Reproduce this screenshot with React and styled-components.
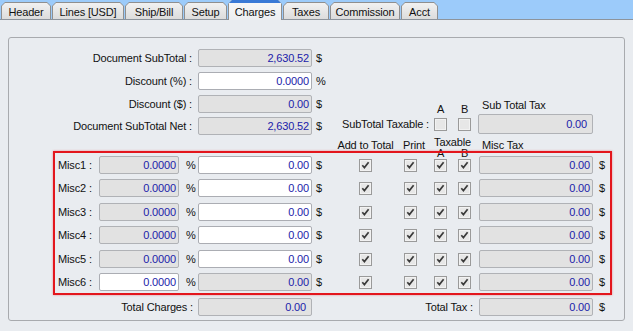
import React from 'react';
import styled, { createGlobalStyle } from 'styled-components';

const GlobalStyle = createGlobalStyle`
  html, body {
    margin: 0;
    padding: 0;
  }
  body {
    width: 633px;
    height: 331px;
    overflow: hidden;
    background: #e9ecf0;
    font-family: "Liberation Sans", Arial, sans-serif;
    font-size: 11px;
    letter-spacing: -0.15px;
    color: #111;
  }
`;

// column tracks shared by every part of the form (x = 55 .. 610)
const COLS = '44px 80px 19px 114px 47px 13px 32px 13px 17px 13px 11px 13px 8px 114px 17px';

const Page = styled.div`
  width: 633px;
  height: 331px;
`;

// tab strip
const TabStrip = styled.div`
  display: flex;
  align-items: flex-end;
  gap: 1px;
  height: 19px;
  padding-left: 1px;
  background: #9ccbfa;
  border-bottom: 1px solid #8d949c;
`;

const TabShell = styled.div`
  display: flex;
  width: ${p => p.$w}px;
  height: ${p => (p.$active ? 20 : 17)}px;
  margin-bottom: ${p => (p.$active ? -1 : 0)}px;
  padding: ${p => (p.$active ? '0 1px' : '1px 1px 0')};
  box-sizing: border-box;
  background: #8f8f8f;
  clip-path: polygon(4px 0, calc(100% - 4px) 0, 100% 4px, 100% 100%, 0 100%, 0 4px);
`;

const TabFace = styled.div`
  flex: 1;
  box-sizing: border-box;
  padding-top: 3px;
  line-height: 13px;
  text-align: center;
  white-space: nowrap;
  color: #111;
  border-top: ${p => (p.$active ? '3px solid #3a7ad6' : 'none')};
  background: ${p => (p.$active ? 'linear-gradient(#f7f7f7, #eceef1)' : 'linear-gradient(#f1f1f1, #dcdcdc)')};
  clip-path: polygon(3px 0, calc(100% - 3px) 0, 100% 3px, 100% 100%, 0 100%, 0 3px);
`;

// group box and form grids
const GroupBox = styled.div`
  margin: 17px 0 0 8px;
  width: 617px;
  height: 284px;
  box-sizing: border-box;
  border: 1px solid #a8aaae;
  border-radius: 3px;
  padding: 11px 0 0 46px;
`;

const FormGrid = styled.div`
  display: grid;
  grid-template-columns: ${COLS};
  grid-template-rows: ${p => p.$rows};
  row-gap: ${p => p.$gap || 0}px;
  align-items: center;
  margin-top: ${p => p.$mt || 0}px;
`;

const MiscBox = styled.div`
  position: relative;
  width: 559px;
  margin: -5.4px 0 0 -2px;
  box-sizing: border-box;
  border: 2px solid #e3161d;
  box-shadow: 0 0 2px rgba(227, 22, 29, 0.45);
  padding: 3px 0 2px;
`;

const FieldLabel = styled.div`
  grid-column: ${p => p.$col};
  grid-row: ${p => p.$row || 'auto'};
  display: flex;
  justify-content: flex-end;
  padding-right: ${p => p.$pr ?? 6}px;
  white-space: nowrap;
`;

const RowLabel = styled.div`
  grid-column: 1;
  padding-left: 3px;
  white-space: nowrap;
`;

const Unit = styled.div`
  grid-column: ${p => p.$col};
  padding-left: ${p => p.$pl ?? 4}px;
`;

const Field = styled.div`
  grid-column: ${p => p.$col};
  grid-row: ${p => p.$row || 'auto'};
  height: ${p => p.$h || 18}px;
  box-sizing: border-box;
  border: 1px solid ${p => (p.$edit ? '#abadb3' : '#b0b2b6')};
  border-radius: 2px;
  background: ${p => (p.$edit ? '#fff' : '#e2e2e2')};
  color: #1b1baa;
  text-align: right;
  padding-right: ${p => (p.$inset ? 5 : 2)}px;
  line-height: ${p => (p.$h || 18) - 2}px;
  white-space: nowrap;
`;

const Box = styled.span`
  grid-column: ${p => p.$col};
  grid-row: ${p => p.$row || 'auto'};
  width: 13px;
  height: 13px;
  margin-top: 1px;
  box-sizing: border-box;
  border: 1px solid #9a9a9a;
  background: #e7e7e7;
  box-shadow: inset 0 0 0 1px #f2f2f2;
  display: flex;
  align-items: center;
  justify-content: center;
`;

const HeadText = styled.div`
  grid-column: ${p => p.$col};
  align-self: start;
  margin-top: 4px;
  line-height: 13px;
  white-space: nowrap;
  display: flex;
  justify-content: ${p => p.$justify || 'flex-start'};
  padding-left: ${p => p.$pl || 0}px;
  margin-left: ${p => p.$ml || 0}px;
`;

const TaxableHead = styled.div`
  grid-column: 10 / 13;
  align-self: start;
  margin-top: 1.6px;
  display: grid;
  grid-template-columns: 13px 11px 13px;
  line-height: 11px;
  text-align: center;
`;

const TaxableTitle = styled.div`
  grid-column: 1 / -1;
`;

const Letter = styled.div`
  grid-column: ${p => p.$col};
  text-align: center;
`;

// SubTotal Taxable block on the right of the top rows
const TaxBlock = styled.div`
  grid-column: 6 / 16;
  grid-row: 3 / span 2;
  align-self: stretch;
  display: grid;
  grid-template-columns: 75px 13px 11px 13px 7px 115px 1fr;
  grid-template-rows: 1fr 20px;
  padding-bottom: 1px;
  align-items: center;
`;

const TaxLetter = styled.div`
  grid-column: ${p => p.$col};
  grid-row: 1;
  align-self: end;
  text-align: center;
  line-height: 12px;
  margin-bottom: -1px;
`;

const TaxTitle = styled.div`
  grid-column: 6;
  grid-row: 1;
  align-self: end;
  padding-left: 4px;
  line-height: 13px;
  margin-bottom: 2px;
`;

const Check = ({ col, row, checked }) => (
  <Box $col={col} $row={row}>
    {checked && (
      <svg width="9" height="9" viewBox="0 0 9 9">
        <path d="M1.3 4.3 L3.4 6.6 L7.6 1.3" stroke="#3a3a3a" strokeWidth="1.7" fill="none" />
      </svg>
    )}
  </Box>
);

const tabs = [
  { label: 'Header', w: 50 },
  { label: 'Lines [USD]', w: 72 },
  { label: 'Ship/Bill', w: 58 },
  { label: 'Setup', w: 43 },
  { label: 'Charges', w: 54, active: true },
  { label: 'Taxes', w: 46 },
  { label: 'Commission', w: 70 },
  { label: 'Acct', w: 37 },
];

const topRows = [
  { label: 'Document SubTotal :', value: '2,630.52', unit: '$' },
  { label: 'Discount (%) :', value: '0.0000', unit: '%', edit: true },
  { label: 'Discount ($) :', value: '0.00', unit: '$' },
  { label: 'Document SubTotal Net :', value: '2,630.52', unit: '$' },
];

const miscRows = [1, 2, 3, 4, 5, 6].map(n => ({
  label: `Misc${n} :`,
  pct: '0.0000',
  amt: '0.00',
  tax: '0.00',
  pctEdit: n === 6,
}));

export default function App() {
  return (
    <Page>
      <GlobalStyle />
      <TabStrip>
        {tabs.map(t => (
          <TabShell key={t.label} $w={t.w} $active={t.active}>
            <TabFace $active={t.active}>{t.label}</TabFace>
          </TabShell>
        ))}
      </TabStrip>

      <GroupBox>
        <FormGrid $rows="repeat(4, 18px)" $gap={4.8}>
          {topRows.map(r => (
            <React.Fragment key={r.label}>
              <FieldLabel $col="1 / 4">{r.label}</FieldLabel>
              <Field $col={4} $edit={r.edit}>{r.value}</Field>
              <Unit $col={5}>{r.unit}</Unit>
            </React.Fragment>
          ))}
          <TaxBlock>
            <TaxLetter $col={2}>A</TaxLetter>
            <TaxLetter $col={4}>B</TaxLetter>
            <TaxTitle>Sub Total Tax</TaxTitle>
            <FieldLabel $col={1} $row={2} $pr={5}>SubTotal Taxable :</FieldLabel>
            <Check col={2} row={2} />
            <Check col={4} row={2} />
            <Field $col={6} $row={2} $h={20} $inset>0.00</Field>
          </TaxBlock>
        </FormGrid>

        <FormGrid $rows="21px">
          <HeadText $col={6} $justify="center">Add to Total</HeadText>
          <HeadText $col={8} $ml={-1}>Print</HeadText>
          <TaxableHead>
            <TaxableTitle>Taxable</TaxableTitle>
            <Letter $col={1}>A</Letter>
            <Letter $col={3}>B</Letter>
          </TaxableHead>
          <HeadText $col={14} $pl={3}>Misc Tax</HeadText>
        </FormGrid>

        <MiscBox>
          <FormGrid $rows="repeat(6, 18px)" $gap={5.4}>
            {miscRows.map(r => (
              <React.Fragment key={r.label}>
                <RowLabel>{r.label}</RowLabel>
                <Field $col={2} $edit={r.pctEdit}>{r.pct}</Field>
                <Unit $col={3} $pl={7}>%</Unit>
                <Field $col={4} $edit={!r.pctEdit}>{r.amt}</Field>
                <Unit $col={5}>$</Unit>
                <Check col={6} checked />
                <Check col={8} checked />
                <Check col={10} checked />
                <Check col={12} checked />
                <Field $col={14}>{r.tax}</Field>
                <Unit $col={15} $pl={6}>$</Unit>
              </React.Fragment>
            ))}
          </FormGrid>
        </MiscBox>

        <FormGrid $rows="18px" $mt={3}>
          <FieldLabel $col="1 / 4" $pr={5}>Total Charges :</FieldLabel>
          <Field $col={4} $inset>0.00</Field>
          <FieldLabel $col="5 / 14">Total Tax :</FieldLabel>
          <Field $col={14}>0.00</Field>
          <Unit $col={15} $pl={6}>$</Unit>
        </FormGrid>
      </GroupBox>
    </Page>
  );
}
